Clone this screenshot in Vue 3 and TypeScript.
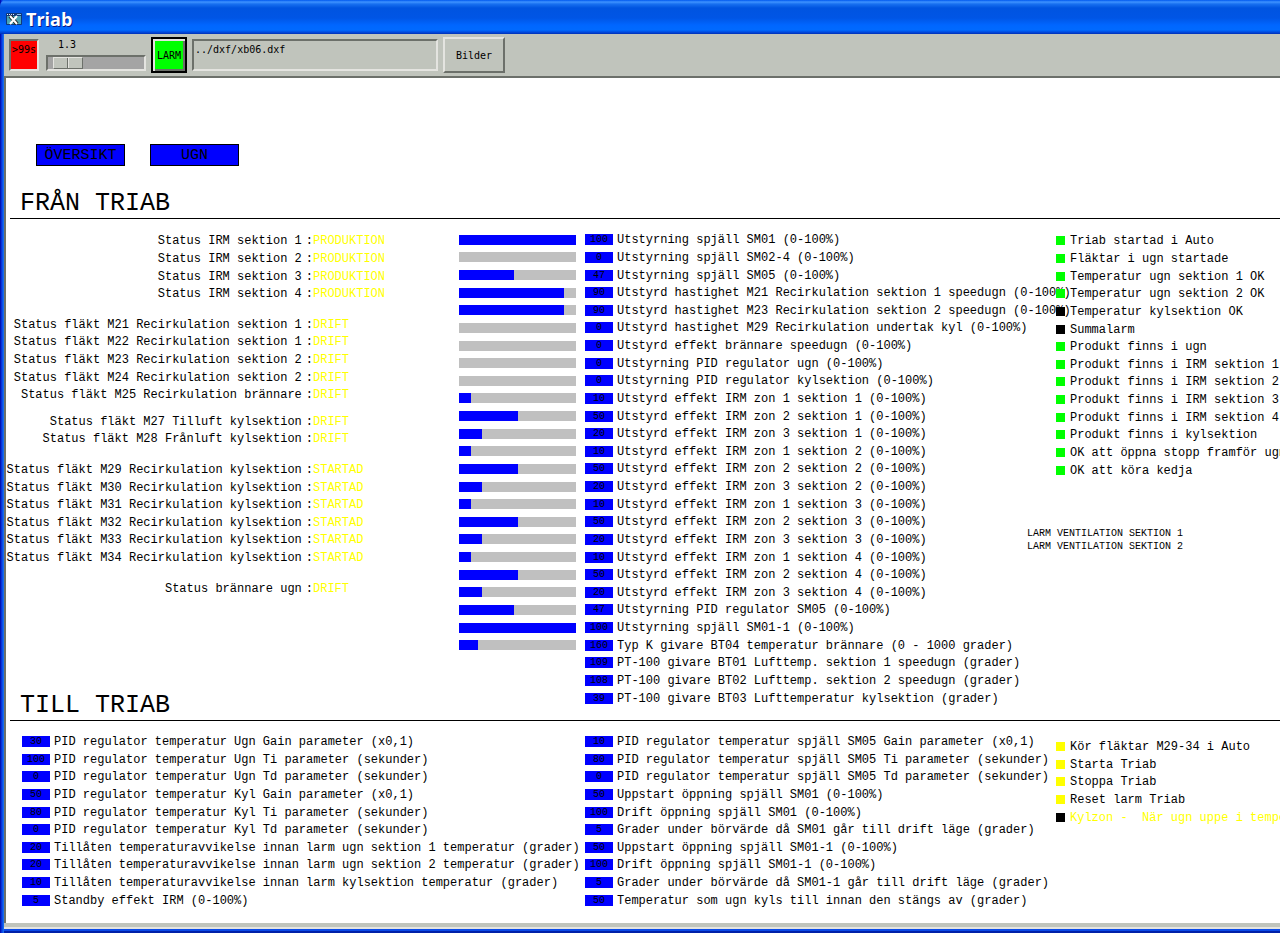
<script setup lang="ts">
import { ref } from 'vue'

interface Status { label: string; value: string; gap?: 'wide' | 'narrow' }
interface Reading { label: string; value: number; bar?: number }
interface Setpoint { label: string; value: string }
interface Signal { label: string; on: boolean }

const status: Status[] = [
  ...[1, 2, 3, 4].map((n) => ({ label: `Status IRM sektion ${n}`, value: 'PRODUKTION' })),
  { label: 'Status fläkt M21 Recirkulation sektion 1', value: 'DRIFT', gap: 'wide' },
  { label: 'Status fläkt M22 Recirkulation sektion 1', value: 'DRIFT' },
  { label: 'Status fläkt M23 Recirkulation sektion 2', value: 'DRIFT' },
  { label: 'Status fläkt M24 Recirkulation sektion 2', value: 'DRIFT' },
  { label: 'Status fläkt M25 Recirkulation brännare', value: 'DRIFT' },
  { label: 'Status fläkt M27 Tilluft kylsektion', value: 'DRIFT', gap: 'narrow' },
  { label: 'Status fläkt M28 Frånluft kylsektion', value: 'DRIFT' },
  { label: 'Status fläkt M29 Recirkulation kylsektion', value: 'STARTAD', gap: 'wide' },
  ...[30, 31, 32, 33, 34].map((n) => ({ label: `Status fläkt M${n} Recirkulation kylsektion`, value: 'STARTAD' })),
  { label: 'Status brännare ugn', value: 'DRIFT', gap: 'wide' },
]

const zonePower = [10, 50, 20]
const zones: Reading[] = [1, 2, 3, 4].flatMap((s) =>
  zonePower.map((p, i) => ({ label: `Utstyrd effekt IRM zon ${i + 1} sektion ${s} (0-100%)`, value: p, bar: p })),
)

const readings: Reading[] = [
  { label: 'Utstyrning spjäll SM01 (0-100%)', value: 100, bar: 100 },
  { label: 'Utstyrning spjäll SM02-4 (0-100%)', value: 0, bar: 0 },
  { label: 'Utstyrning spjäll SM05 (0-100%)', value: 47, bar: 47 },
  { label: 'Utstyrd hastighet M21 Recirkulation sektion 1 speedugn (0-100%)', value: 90, bar: 90 },
  { label: 'Utstyrd hastighet M23 Recirkulation sektion 2 speedugn (0-100%)', value: 90, bar: 90 },
  { label: 'Utstyrd hastighet M29 Recirkulation undertak kyl (0-100%)', value: 0, bar: 0 },
  { label: 'Utstyrd effekt brännare speedugn (0-100%)', value: 0, bar: 0 },
  { label: 'Utstyrning PID regulator ugn (0-100%)', value: 0, bar: 0 },
  { label: 'Utstyrning PID regulator kylsektion (0-100%)', value: 0, bar: 0 },
  ...zones,
  { label: 'Utstyrning PID regulator SM05 (0-100%)', value: 47, bar: 47 },
  { label: 'Utstyrning spjäll SM01-1 (0-100%)', value: 100, bar: 100 },
  { label: 'Typ K givare BT04 temperatur brännare (0 - 1000 grader)', value: 160, bar: 16 },
  { label: 'PT-100 givare BT01 Lufttemp. sektion 1 speedugn (grader)', value: 109 },
  { label: 'PT-100 givare BT02 Lufttemp. sektion 2 speedugn (grader)', value: 108 },
  { label: 'PT-100 givare BT03 Lufttemperatur kylsektion (grader)', value: 39 },
]

const signals: Signal[] = [
  { label: 'Triab startad i Auto', on: true },
  { label: 'Fläktar i ugn startade', on: true },
  { label: 'Temperatur ugn sektion 1 OK', on: true },
  { label: 'Temperatur ugn sektion 2 OK', on: true },
  { label: 'Temperatur kylsektion OK', on: false },
  { label: 'Summalarm', on: false },
  { label: 'Produkt finns i ugn', on: true },
  ...[1, 2, 3, 4].map((n) => ({ label: `Produkt finns i IRM sektion ${n}`, on: true })),
  { label: 'Produkt finns i kylsektion', on: true },
  { label: 'OK att öppna stopp framför ugn', on: true },
  { label: 'OK att köra kedja', on: true },
]

const setpoints = ref<Setpoint[][]>([
  [
    { label: 'PID regulator temperatur Ugn Gain parameter (x0,1)', value: '30' },
    { label: 'PID regulator temperatur Ugn Ti parameter (sekunder)', value: '100' },
    { label: 'PID regulator temperatur Ugn Td parameter (sekunder)', value: '0' },
    { label: 'PID regulator temperatur Kyl Gain parameter (x0,1)', value: '50' },
    { label: 'PID regulator temperatur Kyl Ti parameter (sekunder)', value: '80' },
    { label: 'PID regulator temperatur Kyl Td parameter (sekunder)', value: '0' },
    { label: 'Tillåten temperaturavvikelse innan larm ugn sektion 1 temperatur (grader)', value: '20' },
    { label: 'Tillåten temperaturavvikelse innan larm ugn sektion 2 temperatur (grader)', value: '20' },
    { label: 'Tillåten temperaturavvikelse innan larm kylsektion temperatur (grader)', value: '10' },
    { label: 'Standby effekt IRM (0-100%)', value: '5' },
  ],
  [
    { label: 'PID regulator temperatur spjäll SM05 Gain parameter (x0,1)', value: '10' },
    { label: 'PID regulator temperatur spjäll SM05 Ti parameter (sekunder)', value: '80' },
    { label: 'PID regulator temperatur spjäll SM05 Td parameter (sekunder)', value: '0' },
    { label: 'Uppstart öppning spjäll SM01 (0-100%)', value: '50' },
    { label: 'Drift öppning spjäll SM01 (0-100%)', value: '100' },
    { label: 'Grader under börvärde då SM01 går till drift läge (grader)', value: '5' },
    { label: 'Uppstart öppning spjäll SM01-1 (0-100%)', value: '50' },
    { label: 'Drift öppning spjäll SM01-1 (0-100%)', value: '100' },
    { label: 'Grader under börvärde då SM01-1 går till drift läge (grader)', value: '5' },
    { label: 'Temperatur som ugn kyls till innan den stängs av (grader)', value: '50' },
  ],
])

const commands = ['Kör fläktar M29-34 i Auto', 'Starta Triab', 'Stoppa Triab', 'Reset larm Triab']
const coolingCommand = 'Kylzon -  När ugn uppe i temperatur'
const zoomLevel = ref(1.3)
const file = ref('../dxf/xb06.dxf')
</script>

<template>
  <div class="window">
    <header class="titlebar">
      <svg class="app-icon" viewBox="0 0 16 14" aria-hidden="true">
        <rect x="0" y="1" width="16" height="12" rx="1" fill="#103878" />
        <rect x="1" y="4" width="14" height="8" fill="#48a4b4" />
        <path d="M1 2.5h8" stroke="#e8f0ff" stroke-dasharray="1 1" />
        <path d="M11 2.5h4" stroke="#8cc4f0" />
        <path d="M4 4l7 8" stroke="#222" stroke-width="4" />
        <path d="M4 4l7 8M11 4l-7 8" stroke="#fff" stroke-width="2" />
      </svg>
      <h1>Triab</h1>
    </header>

    <div class="toolbar">
      <output class="timer">&gt;99s</output>
      <label class="scale">
        <span>{{ zoomLevel.toFixed(1) }}</span>
        <input v-model.number="zoomLevel" type="range" min="1" max="5" step="0.1" />
      </label>
      <button class="alarm" type="button">LARM</button>
      <input v-model="file" class="file" type="text" aria-label="Fil" />
      <button class="images" type="button">Bilder</button>
    </div>

    <main class="canvas">
      <nav class="pages">
        <button type="button">ÖVERSIKT</button>
        <button type="button">UGN</button>
      </nav>

      <section>
        <h2>FRÅN TRIAB</h2>
        <div class="from-grid">
          <dl class="status">
            <div v-for="s in status" :key="s.label" class="row" :class="s.gap">
              <dt class="text"><span>{{ s.label }}</span><span>:</span></dt>
              <dd class="text">{{ s.value }}</dd>
            </div>
          </dl>
          <ul class="readings">
            <li v-for="r in readings" :key="r.label" class="row">
              <span class="track" :class="{ empty: r.bar === undefined }">
                <span v-if="r.bar" class="fill" :style="{ width: r.bar + '%' }"></span>
              </span>
              <output class="value">{{ r.value }}</output>
              <span class="text">{{ r.label }}</span>
            </li>
          </ul>
          <div class="side">
            <ul class="signals">
              <li v-for="s in signals" :key="s.label" class="row">
                <span class="lamp" :class="{ on: s.on }"></span>
                <span class="text">{{ s.label }}</span>
              </li>
            </ul>
            <p class="alarms">LARM VENTILATION SEKTION 1<br />LARM VENTILATION SEKTION 2</p>
          </div>
        </div>
      </section>

      <section class="to">
        <h2>TILL TRIAB</h2>
        <div class="to-grid">
          <div v-for="(column, c) in setpoints" :key="c" class="setpoints">
            <label v-for="p in column" :key="p.label" class="row">
              <input v-model="p.value" class="value" type="text" />
              <span class="text">{{ p.label }}</span>
            </label>
          </div>
          <div class="commands">
            <button v-for="c in commands" :key="c" type="button" class="row">
              <span class="lamp ready"></span>
              <span class="text">{{ c }}</span>
            </button>
            <button type="button" class="row pending">
              <span class="lamp"></span>
              <span class="text">{{ coolingCommand }}</span>
            </button>
          </div>
        </div>
      </section>
    </main>
    <div class="bottom-edge"></div>
  </div>
</template>

<style>
html,
body {
  margin: 0;
  background: #fff;
}
</style>

<style scoped>
* {
  box-sizing: border-box;
}
.window {
  display: flex;
  flex-direction: column;
  min-height: 100vh;
  overflow: hidden;
  padding-left: 4px;
  background: linear-gradient(to right, #0014b4 0 1px, #0831d9 1px 2px, #0a50e8 2px 3px, #166aee 3px);
  color: #000;
  font: 12px/15px "Liberation Mono", "Courier New", monospace;
}
button,
input {
  margin: 0;
  padding: 0;
  border: 0;
  border-radius: 0;
  color: inherit;
  font: inherit;
}
h1,
h2,
p,
ul,
dl,
dd {
  margin: 0;
  padding: 0;
  list-style: none;
}
.titlebar {
  display: flex;
  align-items: center;
  gap: 4px;
  height: 34px;
  margin-left: -4px;
  padding: 3px 6px 0;
  border-top-left-radius: 6px;
  background: linear-gradient(#0058ee 0, #3f93ff 2px, #1870f0 4px, #0054e0 8px, #0055e5 18px, #0066ff 25px, #006aff 30px, #003dd0 33px, #0030b0 34px);
}
.app-icon {
  width: 16px;
  height: 14px;
}
h1 {
  color: #fff;
  font: bold 18px/24px "Open Sans", "Noto Sans", sans-serif;
  text-shadow: 1px 1px #0a1883;
}
.toolbar {
  display: flex;
  align-items: center;
  height: 44px;
  padding: 0 5px;
  background: #c0c4bc;
  border-bottom: 2px solid #6c706a;
  font: 10px/13px "DejaVu Sans Mono", "Liberation Mono", monospace;
}
.timer {
  width: 30px;
  height: 32px;
  padding-top: 2px;
  border: 2px solid;
  border-color: #6c706a #e4e4e0 #e4e4e0 #6c706a;
  background: #f00;
  text-align: center;
}
.scale {
  display: flex;
  flex-direction: column;
  gap: 4px;
  width: 100px;
  height: 34px;
  margin-left: 7px;
}
.scale span {
  padding-left: 12px;
}
.scale input {
  appearance: none;
  width: 100%;
  height: 16px;
  border: 2px solid;
  border-color: #6c706a #e4e4e0 #e4e4e0 #6c706a;
  background: #a4a4a4;
}
.scale input::-webkit-slider-thumb {
  appearance: none;
  width: 30px;
  height: 12px;
  border: 1px solid;
  border-color: #e4e4e0 #6c706a #6c706a #e4e4e0;
  background: linear-gradient(to right, #c0c4bc 13px, #6c706a 13px 14px, #e4e4e0 14px 15px, #c0c4bc 15px);
}
.alarm {
  width: 36px;
  height: 36px;
  margin-left: 5px;
  border: 2px solid #000;
  box-shadow: inset 2px 2px #e4e4e0, inset -2px -2px #6c706a;
  background: #0f0;
}
.file {
  width: 246px;
  height: 32px;
  margin-left: 5px;
  padding: 0 1px 12px;
  border: 2px solid;
  border-color: #6c706a #e4e4e0 #e4e4e0 #6c706a;
  background: #c0c4bc;
}
.images {
  width: 62px;
  height: 36px;
  margin-left: 5px;
  border: 2px solid;
  border-color: #e4e4e0 #6c706a #6c706a #e4e4e0;
  background: #c0c4bc;
}
.canvas {
  flex: 1;
  padding: 66px 0 14px 4px;
  border-left: 2px solid #6c706a;
  background: #fff;
  white-space: pre;
}
.pages {
  display: flex;
  gap: 25px;
  margin-left: 26px;
}
.pages button {
  width: 89px;
  height: 22px;
  border: 1px solid #000;
  background: #00f;
  font-size: 15px;
}
h2 {
  margin-top: 21px;
  padding: 3px 0 0 10px;
  border-bottom: 1px solid #000;
  font-size: 25px;
  font-weight: normal;
  line-height: 28px;
}
.from-grid {
  display: grid;
  grid-template-columns: 449fr 568fr 253fr;
  align-items: start;
  padding-top: 12px;
}
.from-grid > *,
.to-grid > * {
  min-width: 0;
}
.row {
  display: flex;
  flex: 1;
  align-items: center;
}
.text {
  padding-top: 2px;
}
.status,
.readings,
.signals,
.setpoints,
.commands {
  display: flex;
  flex-direction: column;
}
.status {
  min-height: 366px;
  padding-top: 1px;
}
.status .wide {
  margin-top: 13px;
}
.status .narrow {
  margin-top: 9px;
}
dt {
  display: flex;
  flex: 0 0 303px;
  justify-content: flex-end;
  gap: 4px;
  min-width: 0;
}
dd {
  color: #ff0;
}
.readings {
  min-height: 476px;
}
.track {
  flex: none;
  width: 117px;
  height: 10px;
  margin-right: 9px;
  background: #c0c0c0;
}
.empty {
  background: none;
}
.fill {
  display: block;
  height: 100%;
  background: #00f;
}
.value {
  flex: none;
  width: 28px;
  height: 11px;
  margin-right: 4px;
  background: #00f;
  font-size: 10px;
  line-height: 11px;
  text-align: center;
}
.signals {
  min-height: 247px;
  margin: 1px 0 0 29px;
}
.lamp {
  flex: none;
  width: 9px;
  height: 9px;
  margin-right: 5px;
  background: #000;
}
.on {
  background: #0f0;
}
.ready {
  background: #ff0;
}
.alarms {
  margin-top: 48px;
  font-size: 10px;
  line-height: 13px;
}
.to h2 {
  margin-top: -18px;
}
.to-grid {
  display: grid;
  grid-template-columns: 563fr 471fr 224fr;
  align-items: start;
  padding: 12px 0 0 12px;
}
.setpoints {
  min-height: 176px;
}
.commands {
  min-height: 88px;
  margin-top: 5px;
}
.commands button {
  background: none;
  text-align: left;
}
.commands .pending {
  color: #ff0;
}
.bottom-edge {
  height: 10px;
  background: linear-gradient(#c0c4bc 4px, #e4e4e0 4px 6px, #0a4ae8 6px 8px, #0020a8 8px);
}
</style>
